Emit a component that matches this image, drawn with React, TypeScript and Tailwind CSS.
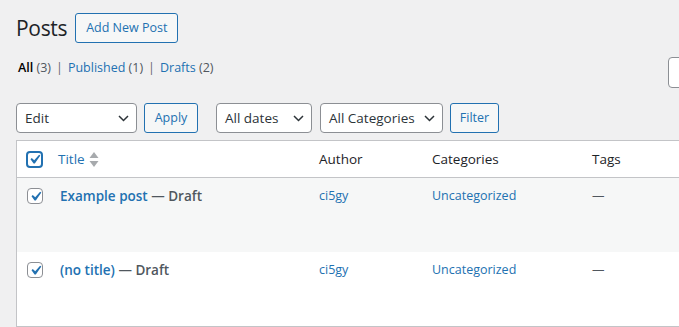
import React from "react";

const Chevron = () => (
  <svg width="11" height="7" viewBox="0 0 11 7" className="shrink-0">
    <path d="M1 1l4.5 4.5L10 1" fill="none" stroke="#2c3338" strokeWidth="1.5" />
  </svg>
);

const Select = ({ label, w }: { label: string; w: string }) => (
  <div
    className={`${w} h-[30px] flex items-center justify-between bg-white border border-[#8c8f94] rounded-[4px] pl-2 pr-[7px] text-[13.5px] text-[#2c3338]`}
  >
    <span>{label}</span>
    <Chevron />
  </div>
);

const Btn = ({ label, w }: { label: string; w: string }) => (
  <div
    className={`${w} h-[30px] flex items-center justify-center bg-[#f6f7f7] border border-[#2271b1] rounded-[3px] text-[12.5px] text-[#2271b1]`}
  >
    {label}
  </div>
);

const Check = ({ header }: { header?: boolean }) => (
  <div
    className={
      header
        ? "w-[17px] h-[17px] border-2 border-[#2271b1] rounded-[4px] bg-white flex items-center justify-center overflow-visible"
        : "w-4 h-4 border border-[#8c8f94] rounded-[4px] bg-white flex items-center justify-center overflow-visible"
    }
  >
    <svg width="19" height="19" viewBox="0 0 20 20" className="shrink-0 -m-[3px]">
      <path d="M14.83 4.89l1.34.94-5.81 8.38H9.02L5.78 9.67l1.34-1.25 2.57 2.4z" fill="#2271b1" />
    </svg>
  </div>
);

const SortArrows = () => (
  <svg width="10" height="15" viewBox="0 0 10 15" className="ml-[4px]">
    <path d="M5 0L9.5 6H0.5z" fill="#a7aaad" />
    <path d="M5 15L9.5 9H0.5z" fill="#a7aaad" />
  </svg>
);

const Row = ({ title, bg }: { title: string; bg: string }) => (
  <div className={`grid grid-cols-[31px_261px_113px_160px_1fr] h-[74px] ${bg}`}>
    <div className="pl-[10px] pt-[10px]">
      <Check />
    </div>
    <div className="pl-[12px] pt-2 leading-[20px] text-[13.5px] font-semibold">
      <span className="text-[#2271b1]">{title}</span>
      <span className="text-[#50575e]"> — Draft</span>
    </div>
    <div className="pl-[10px] pt-2 leading-[20px] text-[12.5px] text-[#2271b1]">ci5gy</div>
    <div className="pl-[10px] pt-2 leading-[20px] text-[12.5px] text-[#2271b1]">Uncategorized</div>
    <div className="pl-[10px] pt-2 leading-[20px] text-[12.5px] text-[#50575e]">—</div>
  </div>
);

export default function App() {
  return (
    <div className="w-[679px] h-[327px] overflow-hidden bg-[#f0f0f1] font-['Open_Sans',sans-serif] text-[#1d2327]">
      <div className="pl-4 pt-[13px] w-[900px]">
        <div className="flex items-center h-[30px]">
          <h1 className="text-[21px] tracking-[-0.3px] leading-[30px] font-normal text-[#1d2327]">Posts</h1>
          <div className="ml-[8px] w-[103px] h-[30px] flex items-center justify-center bg-[#f6f7f7] border border-[#2271b1] rounded-[3px] text-[12.5px] text-[#2271b1]">
            Add New Post
          </div>
        </div>

        <div className="mt-[14px] grid grid-cols-[652px_200px] items-start">
          <div className="pl-[2px] pt-[1px] leading-[20px] text-[12.5px] text-[#646970]">
            <span className="font-semibold text-black">All</span>
            <span className="text-[#50575e]"> (3)</span>
            <span className="mx-[5px]">|</span>
            <span className="text-[#2271b1]">Published</span>
            <span className="text-[#50575e]"> (1)</span>
            <span className="mx-[5px]">|</span>
            <span className="text-[#2271b1]">Drafts</span>
            <span className="text-[#50575e]"> (2)</span>
          </div>
          <div className="h-[31px] bg-white border border-[#8c8f94] rounded-[4px]" />
        </div>

        <div className="mt-[15px] flex items-center h-[30px]">
          <Select label="Edit" w="w-[121px]" />
          <div className="ml-[7px]">
            <Btn label="Apply" w="w-[54px]" />
          </div>
          <div className="ml-[18px]">
            <Select label="All dates" w="w-[96px]" />
          </div>
          <div className="ml-[8px]">
            <Select label="All Categories" w="w-[123px]" />
          </div>
          <div className="ml-[7px]">
            <Btn label="Filter" w="w-[49px]" />
          </div>
        </div>

        <div className="mt-[7px] w-[720px] border border-[#c3c4c7] bg-white">
          <div className="grid grid-cols-[31px_261px_113px_160px_1fr] h-[37px] items-center border-b border-[#c3c4c7] text-[13.5px]">
            <div className="pl-[9px] flex items-center">
              <Check header />
            </div>
            <div className="pl-[10px] flex items-center">
              <span className="text-[#2271b1]">Title</span>
              <SortArrows />
            </div>
            <div className="pl-[10px]">Author</div>
            <div className="pl-[10px]">Categories</div>
            <div className="pl-[10px]">Tags</div>
          </div>
          <Row title="Example post" bg="bg-[#f6f7f7]" />
          <Row title="(no title)" bg="bg-white" />
        </div>
      </div>
    </div>
  );
}
